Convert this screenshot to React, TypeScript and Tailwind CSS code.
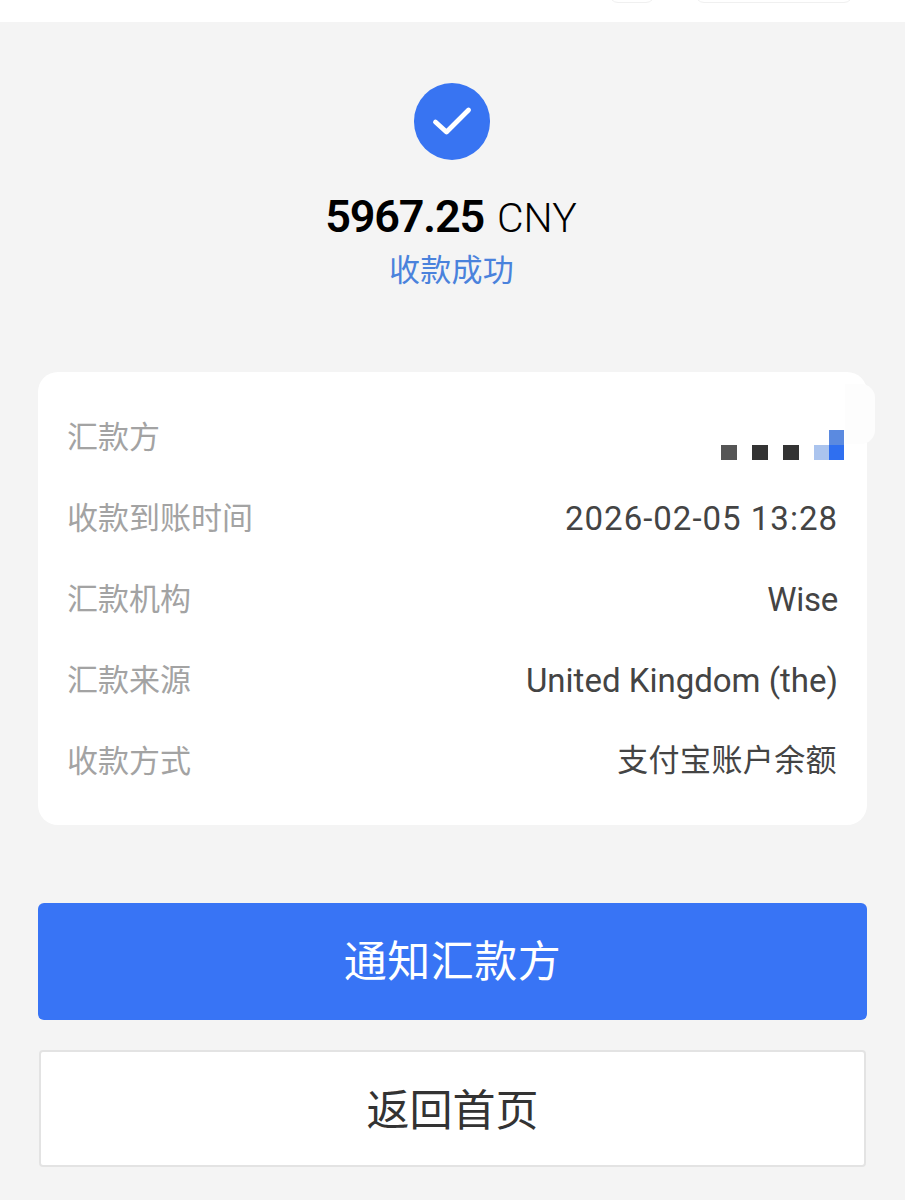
const rows = [
  { label: "收款到账时间", value: "2026-02-05 13:28", valueClass: "text-[33px] tracking-[1px]" },
  { label: "汇款机构", value: "Wise", valueClass: "text-[33px] tracking-[-0.3px]" },
  { label: "汇款来源", value: "United Kingdom (the)", valueClass: "text-[33px]" },
  { label: "收款方式", value: "支付宝账户余额", valueClass: "text-[31px] tracking-[0.4px] mr-[1px]" },
];

const font = "font-['Roboto','Noto_Sans_CJK_SC',sans-serif]";

// the payer name is pixelated in the picture
const Mosaic = () => (
  <div className="flex items-end mt-[33px] mr-[-6px] h-[30px]">
    <div className="w-4 h-[15px] bg-[#555555] mr-[15px]" />
    <div className="w-4 h-[15px] bg-[#333333] mr-[15px]" />
    <div className="w-4 h-[15px] bg-[#333333] mr-[15px]" />
    <div className="w-[15px] h-[15px] bg-[#abc4ee]" />
    <div className="w-[15px] flex flex-col">
      <div className="h-[15px] bg-[#5b8ae0]" />
      <div className="h-[15px] bg-[#2f6ff0]" />
    </div>
  </div>
);

export default function App() {
  return (
    <div className={`w-[905px] h-[1200px] overflow-hidden bg-[#f4f4f4] flex flex-col ${font}`}>
      <div className="h-[22px] bg-white flex justify-end shrink-0 overflow-hidden pr-[52px] gap-10">
        <div className="w-[46px] h-[18px] mt-[-15px] rounded-full border border-[#f0f0f0]" />
        <div className="w-[158px] h-[18px] mt-[-15px] rounded-full border border-[#f0f0f0]" />
      </div>

      <div className="flex flex-col items-center pt-[61px]">
        <div className="w-[76px] h-[77px] ml-[-2px] rounded-full bg-[#3874f2] flex items-center justify-center">
          <svg width="40" height="40" viewBox="0 0 40 40" fill="none" className="mt-[-1px]">
            <path d="M3.5 20.5 L14 30 L35 9" transform="translate(-0.2 -0.5) scale(1.05)" stroke="white" strokeWidth="4.6" strokeLinecap="round" strokeLinejoin="round" />
          </svg>
        </div>
        <div className="mt-[27px] h-[58px] flex items-center gap-[13px] text-black ml-[-3px]">
          <span className="text-[45px] leading-none font-semibold tracking-[-1.2px]">5967.25</span>
          <span className="text-[41px] leading-none font-light mt-1">CNY</span>
        </div>
        <div className="text-[31px] leading-[50px] mt-[1px] ml-[-2px] tracking-[0.3px] text-[#4a82dc]">收款成功</div>
      </div>

      <div className="relative mx-[38px] mt-[76px] h-[453px] shrink-0 rounded-[20px] bg-white px-[29px] pt-[25px] text-[31px]">
        <div className="absolute top-[12px] right-[-8px] w-[30px] h-[60px] rounded-r-[14px] bg-[#fdfdfd]" />
        <div className="relative h-[81px] flex justify-between">
          <span className="text-[#a3a3a3] leading-[81px] h-[81px]">汇款方</span>
          <Mosaic />
        </div>
        {rows.map((row) => (
          <div key={row.label} className="relative h-[81px] flex items-center justify-between">
            <span className="text-[#a3a3a3] mt-[2px]">{row.label}</span>
            <span className={`text-[#444444] ${row.valueClass}`}>{row.value}</span>
          </div>
        ))}
      </div>

      <button className="mx-[38px] mt-[78px] h-[117px] shrink-0 rounded-[6px] bg-[#3874f5] pt-[1px] text-white text-[43px] tracking-[0.5px]">
        通知汇款方
      </button>
      <button className="mx-[39px] mt-[30px] h-[117px] shrink-0 rounded-[4px] bg-white border-2 border-[#e3e3e3] pt-[5px] text-[#333333] text-[43px]">
        返回首页
      </button>
    </div>
  );
}
